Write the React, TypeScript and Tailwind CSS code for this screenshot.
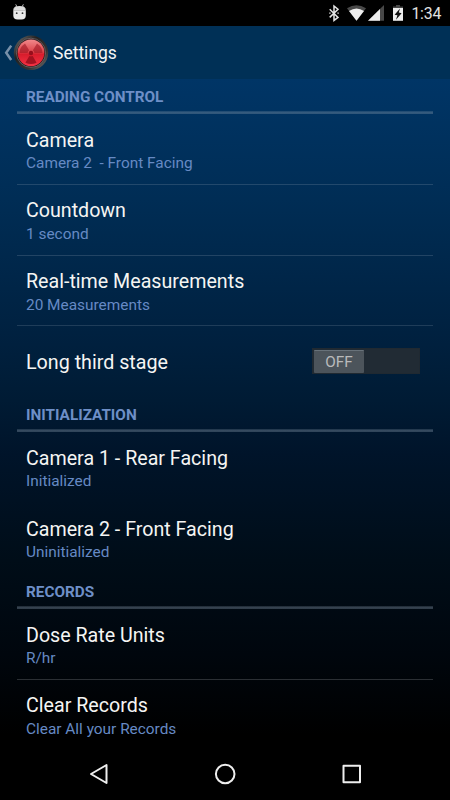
import React from "react";

function Header({ label }: { label: string }) {
  return (
    <div className="flex h-[35px] flex-col justify-between">
      <h2 className="pl-[9px] pt-2 text-[15.3px] font-bold leading-[20px] text-[#6e8fc7]">{label}</h2>
      <div className="h-[3px] bg-linear-to-b from-[#8496a8]/20 via-[#8496a8]/40 to-[#8496a8]/35" />
    </div>
  );
}

function Row({ title, note, className, titleClass }: { title: string; note: string; className: string; titleClass: string }) {
  return (
    <div className={`${className} flex flex-col pl-[9px] pt-[14px]`}>
      <div className={`${titleClass} h-6 text-[19.65px] leading-6 text-[#f5f5f3]`}>{title}</div>
      <div className="whitespace-pre text-[15.4px] leading-[23px] text-[#668ac4]">{note}</div>
    </div>
  );
}

function StatusBar() {
  return (
    <div className="h-[26px] bg-black">
      <svg width="450" height="26" viewBox="0 0 450 26" fill="none">
        <path d="M13.3 10.2H25.8V15.5Q25.8 19.4 21.5 19.4H17.6Q13.3 19.4 13.3 15.5Z" fill="#e9e9e9" />
        <path d="M13.5 9.5Q14.2 7 16.8 6.3L15.7 4.3M25.6 9.5Q24.9 7 22.3 6.3L23.4 4.3" stroke="#ddd" strokeWidth=".8" />
        <path d="M13.3 10.4Q14 6 19.5 6T25.8 10.4Z" fill="#ddd" />
        <circle cx="16.7" cy="13.2" r=".9" fill="#333" />
        <circle cx="22.5" cy="13.2" r=".9" fill="#333" />
        <path d="M329.7 9.2L338 17.4L334 20.4V6.1L338 9.2L329.7 17.4" stroke="#e3e3e3" strokeWidth="1.5" />
        <path d="M329.2 13.2h1.4M337.4 13.2h1.4" stroke="#ddd" strokeWidth="1.3" />
        <path d="M347 8.3Q356.5 2 366 8.3L356.5 20.7Z" fill="#484848" />
        <path d="M349 11Q356.5 6 364 11L356.5 20.7Z" fill="#eee" />
        <path d="M368 20.8L384 5V20.8Z" fill="#484848" />
        <path d="M368 20.8L380 9V20.8Z" fill="#eee" />
        <path d="M396 5.1h4v1.4h3v2h-10v-2h3Z" fill="#484848" />
        <path d="M393 8h10v12.8h-10Z" fill="#eee" />
        <path d="M400 8.6L394.6 14.8L397.4 15.2L396 19.8L401.6 13.2L398.8 12.6Z" fill="#111" />
        <text x="411.4" y="19" fill="#e2e2e2" fontFamily="Roboto" fontSize="15.8" fontWeight="400" textLength="30">1:34</text>
      </svg>
    </div>
  );
}

function AppIcon() {
  return (
    <svg className="shrink-0" width="36" height="36" viewBox="0 0 36 36">
      <defs>
        <linearGradient id="rim" x1="0" y1="0" x2="1" y2="1">
          <stop stopColor="#777" /><stop offset=".35" stopColor="#222" /><stop offset=".7" stopColor="#333" /><stop offset="1" stopColor="#777" />
        </linearGradient>
        <linearGradient id="face" x2="0" y2="1">
          <stop stopColor="#f08a8c" /><stop offset=".48" stopColor="#dc4148" /><stop offset=".55" stopColor="#d81c2c" /><stop offset="1" stopColor="#f53345" />
        </linearGradient>
      </defs>
      <circle cx="18" cy="17.8" r="17.2" fill="url(#rim)" />
      <circle cx="18" cy="17.8" r="14.6" fill="#251619" stroke="#8d8183" strokeWidth=".6" />
      <circle cx="18" cy="17.8" r="13.4" fill="url(#face)" />
      <g fill="#980e1c">
        <circle cx="18" cy="18" r="2.2" />
        <path d="M14.6 18H6.5Q6.5 12.4 12 8.6L16.1 15.2Q14.7 16.2 14.6 18Z" fillOpacity=".55" />
        <path d="M21.4 18h8.1Q29.5 12.4 24 8.6L19.9 15.2Q21.3 16.2 21.4 18Z" fillOpacity=".55" />
        <path d="M16.3 20.9L12.4 27.8Q18 30.4 23.6 27.8L19.7 20.9Q18 21.8 16.3 20.9Z" fillOpacity=".85" />
      </g>
    </svg>
  );
}

export default function App() {
  return (
    <div className="flex h-[800px] w-[450px] flex-col overflow-hidden bg-black font-['Roboto',sans-serif]">
      <StatusBar />
      <header className="flex h-[53px] items-center bg-[#003056]">
        <svg className="ml-[4px] shrink-0" width="9" height="18" viewBox="0 0 9 18"><path d="M7.2 1.6L2.2 8.8L7.2 16" fill="none" stroke="#7890a8" strokeWidth="2.5" /></svg>
        <AppIcon />
        <h1 className="ml-[4px] pt-px text-[17.5px] leading-6 text-[#f4f6f7]">Settings</h1>
      </header>
      <main className="flex h-[669px] flex-col bg-[linear-gradient(to_bottom,#003566_0%,#002d55_18%,#002140_38%,#001b34_48%,#00142a_56%,#000d18_72%,#00060d_86%,#000000_98%)] px-[17px]">
        <Header label="READING CONTROL" />
        <Row title="Camera" note="Camera 2  - Front Facing" className="h-[71px] border-b border-[#7a8ea4]/28" titleClass="pt-px" />
        <Row title="Countdown" note="1 second" className="h-[71px] border-b border-[#7a8ea4]/28" titleClass="" />
        <Row title="Real-time Measurements" note="20 Measurements" className="h-[70px] border-b border-[#7a8ea4]/25" titleClass="" />
        <div className="flex h-[71px] items-center justify-between pl-[9px] pr-[13px]">
          <span className="pt-[2px] text-[19.69px] leading-6 text-[#f5f5f3]">Long third stage</span>
          <div className="mb-px h-[26px] w-[108px] border border-[#202931] bg-[#212b34] py-px pl-px">
            <div className="flex h-[23px] w-[50px] items-center justify-center rounded-[1px] border-t border-[#68727a] bg-[#4c545b] pt-px text-[15.3px] text-[#b9babb]">OFF</div>
          </div>
        </div>
        <Header label="INITIALIZATION" />
        <Row title="Camera 1 - Rear Facing" note="Initialized" className="h-[71px]" titleClass="pt-px" />
        <Row title="Camera 2 - Front Facing" note="Uninitialized" className="h-[71px]" titleClass="pt-px" />
        <Header label="RECORDS" />
        <Row title="Dose Rate Units" note="R/hr" className="h-[71px] border-b border-[#7a8088]/35" titleClass="pt-px" />
        <Row title="Clear Records" note="Clear All your Records" className="h-[68px]" titleClass="" />
      </main>
      <nav className="h-[52px] bg-black">
        <svg width="450" height="52" viewBox="0 0 450 52" fill="none" stroke="#eee" strokeWidth="2" strokeLinejoin="round">
          <path d="M91 26L106.5 17V35Z" />
          <circle cx="225.2" cy="26" r="9.3" />
          <rect x="343.5" y="17.8" width="16.5" height="16.5" />
        </svg>
      </nav>
    </div>
  );
}
